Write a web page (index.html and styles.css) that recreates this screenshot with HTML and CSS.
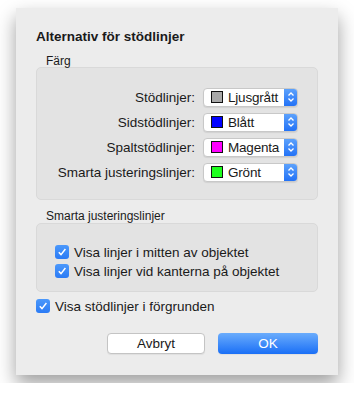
FILE: index.html
```html
<!DOCTYPE html>
<html lang="sv">
<head>
  <meta charset="UTF-8">
  <title>Alternativ för stödlinjer</title>
  <link rel="stylesheet" href="styles.css">
</head>
<body>
  <div class="dialog">
    <h1 class="title">Alternativ för stödlinjer</h1>

    <div class="group-label first">Färg</div>
    <div class="group colors">
      <div class="row">
        <span class="row-label">Stödlinjer:</span>
        <div class="popup">
          <span class="swatch" style="background:#a9a9a9"></span>
          <span class="popup-text">Ljusgrått</span>
          <span class="stepper"><svg width="8" height="12" viewBox="0 0 8 12"><path d="M1.5 4.5 4 2 6.5 4.5M1.5 7.5 4 10 6.5 7.5" fill="none" stroke="#fff" stroke-width="1.3"/></svg></span>
        </div>
      </div>
      <div class="row">
        <span class="row-label">Sidstödlinjer:</span>
        <div class="popup">
          <span class="swatch" style="background:#0000ff"></span>
          <span class="popup-text">Blått</span>
          <span class="stepper"><svg width="8" height="12" viewBox="0 0 8 12"><path d="M1.5 4.5 4 2 6.5 4.5M1.5 7.5 4 10 6.5 7.5" fill="none" stroke="#fff" stroke-width="1.3"/></svg></span>
        </div>
      </div>
      <div class="row">
        <span class="row-label">Spaltstödlinjer:</span>
        <div class="popup">
          <span class="swatch" style="background:#ff00ff"></span>
          <span class="popup-text">Magenta</span>
          <span class="stepper"><svg width="8" height="12" viewBox="0 0 8 12"><path d="M1.5 4.5 4 2 6.5 4.5M1.5 7.5 4 10 6.5 7.5" fill="none" stroke="#fff" stroke-width="1.3"/></svg></span>
        </div>
      </div>
      <div class="row">
        <span class="row-label">Smarta justeringslinjer:</span>
        <div class="popup">
          <span class="swatch" style="background:#1eff1e"></span>
          <span class="popup-text">Grönt</span>
          <span class="stepper"><svg width="8" height="12" viewBox="0 0 8 12"><path d="M1.5 4.5 4 2 6.5 4.5M1.5 7.5 4 10 6.5 7.5" fill="none" stroke="#fff" stroke-width="1.3"/></svg></span>
        </div>
      </div>
    </div>

    <div class="group-label second">Smarta justeringslinjer</div>
    <div class="group smart">
      <label class="check">
        <span class="box"><svg width="10" height="10" viewBox="0 0 10 10"><path d="M1.8 5.2 4 7.6 8.4 2" fill="none" stroke="#fff" stroke-width="1.5"/></svg></span>
        Visa linjer i mitten av objektet
      </label>
      <label class="check">
        <span class="box"><svg width="10" height="10" viewBox="0 0 10 10"><path d="M1.8 5.2 4 7.6 8.4 2" fill="none" stroke="#fff" stroke-width="1.5"/></svg></span>
        Visa linjer vid kanterna på objektet
      </label>
    </div>

    <label class="check front">
      <span class="box"><svg width="10" height="10" viewBox="0 0 10 10"><path d="M1.8 5.2 4 7.6 8.4 2" fill="none" stroke="#fff" stroke-width="1.5"/></svg></span>
      Visa stödlinjer i förgrunden
    </label>

    <div class="buttons">
      <button class="btn">Avbryt</button>
      <button class="btn primary">OK</button>
    </div>
  </div>
</body>
</html>
```

FILE: styles.css
```css
/* Page */
body {
  margin: 0;
  background: #fff;
  font-family: "Liberation Sans", Arial, sans-serif;
  font-size: 13.5px;
  color: #1a1a1a;
}

/* Dialog sheet */
.dialog {
  width: 322px;
  height: 367px;
  box-sizing: border-box;
  margin: 8px 16px;
  padding: 21px 20px 0 20px;
  background: #ececec;
  box-shadow: 0 9px 18px rgba(0, 0, 0, 0.38);
}

.title {
  margin: 0;
  font-size: 13.5px;
  font-weight: bold;
  line-height: 16px;
}

.group-label {
  margin-left: 10px;
  font-size: 12px;
  line-height: 14px;
}

.group-label.first {
  margin-top: 9px;
  margin-bottom: -1px;
}

.group-label.second {
  margin-top: 9px;
  margin-bottom: 0;
}

.group {
  background: #e3e3e3;
  border: 1px solid #d9d9d9;
  border-radius: 5px;
  box-sizing: border-box;
}

/* Colour group */
.colors {
  height: 133px;
  padding: 19px 19px 0 0;
  display: flex;
  flex-direction: column;
  gap: 5px;
}

.row {
  display: flex;
  align-items: center;
  height: 20px;
}

.row-label {
  width: 158px;
  text-align: right;
  margin-right: 8px;
}

.popup {
  width: 95px;
  height: 19px;
  box-sizing: border-box;
  display: flex;
  align-items: center;
  background: #fff;
  border: 1px solid #c8c8c8;
  border-radius: 4px;
  box-shadow: 0 1px 1px rgba(0, 0, 0, 0.08);
  overflow: hidden;
}

.swatch {
  width: 10px;
  height: 10px;
  margin-left: 7px;
  border: 1px solid #111;
}

.popup-text {
  flex: 1;
  margin-left: 5px;
  letter-spacing: -0.2px;
}

.stepper {
  width: 14px;
  height: 19px;
  display: flex;
  align-items: center;
  justify-content: center;
  background: linear-gradient(#5fa4fc, #1f6ff6);
  margin-right: -1px;
}

/* Smart guides group */
.smart {
  height: 69px;
  padding: 19px 0 0 18px;
  display: flex;
  flex-direction: column;
  gap: 1px;
}

.check {
  display: flex;
  align-items: center;
  height: 18px;
  gap: 5px;
}

.box {
  width: 14px;
  height: 14px;
  border-radius: 3px;
  background: linear-gradient(#4b98fb, #2b7bf5);
  display: flex;
  align-items: center;
  justify-content: center;
}

.front {
  margin-top: 5px;
}

/* Buttons */
.buttons {
  display: flex;
  justify-content: flex-end;
  gap: 13px;
  margin-top: 18px;
}

.btn {
  height: 21px;
  width: 98px;
  font-family: inherit;
  font-size: 13.5px;
  color: #1a1a1a;
  background: #fff;
  border: 1px solid #c4c4c4;
  border-radius: 4px;
  box-shadow: 0 1px 1px rgba(0, 0, 0, 0.06);
  padding: 0;
}

.btn.primary {
  width: 100px;
  color: #fff;
  border: none;
  background: linear-gradient(#6aacfc, #1a6ff6);
}
```
